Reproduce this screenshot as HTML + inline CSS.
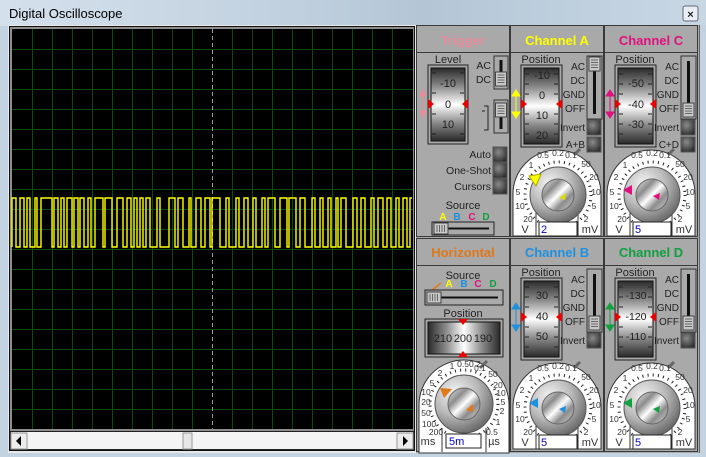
<!DOCTYPE html>
<html><head><meta charset="utf-8"><style>
html,body{margin:0;padding:0;width:706px;height:457px;overflow:hidden;background:#c8d6e4}
svg{display:block}
text{font-family:"Liberation Sans",sans-serif}
</style></head><body>
<svg width="706" height="457" viewBox="0 0 706 457" xmlns="http://www.w3.org/2000/svg">
<defs>
<linearGradient id="tb" x1="0" y1="0" x2="1" y2="0"><stop offset="0" stop-color="#d4e0ec"/><stop offset=".35" stop-color="#c4d3e1"/><stop offset=".6" stop-color="#b4c6d6"/><stop offset="1" stop-color="#c8d7e4"/></linearGradient>
<linearGradient id="dv" x1="0" y1="0" x2="0" y2="1"><stop offset="0" stop-color="#2a2a2a"/><stop offset=".25" stop-color="#8a8a8a"/><stop offset=".5" stop-color="#ffffff"/><stop offset=".75" stop-color="#8a8a8a"/><stop offset="1" stop-color="#2a2a2a"/></linearGradient>
<linearGradient id="dh" x1="0" y1="0" x2="1" y2="0"><stop offset="0" stop-color="#2a2a2a"/><stop offset=".25" stop-color="#8a8a8a"/><stop offset=".5" stop-color="#ffffff"/><stop offset=".75" stop-color="#8a8a8a"/><stop offset="1" stop-color="#2a2a2a"/></linearGradient>
<radialGradient id="ko" cx=".35" cy=".3" r=".8"><stop offset="0" stop-color="#f4f4f4"/><stop offset=".5" stop-color="#b8b8b8"/><stop offset="1" stop-color="#5a5a5a"/></radialGradient>
<linearGradient id="ki" x1="0" y1="0" x2="1" y2="1"><stop offset="0" stop-color="#f0f0f0"/><stop offset=".3" stop-color="#8c8c8c"/><stop offset=".5" stop-color="#ffffff"/><stop offset=".7" stop-color="#8c8c8c"/><stop offset="1" stop-color="#d8d8d8"/></linearGradient>
<radialGradient id="bt" cx=".4" cy=".35" r=".7"><stop offset="0" stop-color="#8a8a8a"/><stop offset="1" stop-color="#2e2e2e"/></radialGradient>
<g id="dial">
<path d="M3,236 V194 A44,44 0 0 1 91,194 V236 Z" fill="#fff" stroke="#333"/>
<line x1="64" y1="155" x2="70" y2="149" stroke="#666" stroke-width="3"/>
<line x1="26" y1="212" x2="26" y2="236" stroke="#333"/>
<line x1="68" y1="212" x2="68" y2="236" stroke="#333"/>
<circle cx="48" cy="195" r="33" fill="none" stroke="#222" stroke-width="3" stroke-dasharray="1 4.2"/>
<circle cx="48" cy="195" r="28" fill="url(#ko)" stroke="#555"/>
<circle cx="48" cy="195" r="16" fill="url(#ki)" stroke="#666"/>
<rect x="29" y="222" width="38" height="14" fill="#fff" stroke="#222"/>
</g>
<g id="dlab" font-size="8.5" fill="#333" text-anchor="middle">
<text x="33" y="158">0.5</text><text x="48" y="156">0.2</text><text x="61" y="158">0.1</text>
<text x="76" y="167">50</text><text x="84" y="180">20</text><text x="86" y="195">10</text><text x="84" y="209">5</text><text x="76" y="222">2</text>
<text x="21" y="168">1</text><text x="12" y="180">2</text><text x="8" y="195">5</text><text x="10" y="209">10</text><text x="18" y="222">20</text>
<text x="15" y="233" font-size="11">V</text><text x="80" y="233" font-size="11">mV</text>
</g>
<g id="btn"><rect x="0" y="0" width="14" height="15" fill="url(#bt)" stroke="#555"/></g>
<g id="drum">
<rect x="11" y="65" width="41" height="82" fill="#a8a8a8" stroke="#222"/>
<rect x="14" y="68" width="35" height="76" fill="url(#dv)" stroke="#111"/>
<path d="M15,74h4M15,84h4M15,94h4M15,114h4M15,124h4M15,134h4M44,74h4M44,84h4M44,94h4M44,114h4M44,124h4M44,134h4" stroke="#222"/>
<polygon points="11,99 17,104 11,109" fill="#e00"/><polygon points="52,99 46,104 52,109" fill="#e00"/>
</g>
<g id="sld">
<rect x="77" y="56" width="15" height="63" fill="#aaa" stroke="#333"/>
<rect x="83" y="61" width="3" height="53" fill="#111"/>
</g>
<g id="thumb"><rect x="0" y="0" width="11" height="14" fill="#c8c8c8" stroke="#444"/><path d="M2,3h7M2,5.5h7M2,8h7M2,10.5h7" stroke="#666"/></g>
</defs>

<rect width="706" height="457" fill="#c4d3e1"/>
<rect width="706" height="26" fill="url(#tb)"/>
<text x="9" y="18" font-size="13" fill="#000">Digital Oscilloscope</text>
<rect x="683" y="6" width="15" height="15" rx="2" fill="#e8eef4" stroke="#667"/>
<text x="690.5" y="18" font-size="11" font-weight="bold" text-anchor="middle" fill="#222">×</text>

<rect x="8" y="25" width="408" height="428" fill="#e8e8e8"/>
<rect x="9.5" y="26.5" width="405" height="424" fill="none" stroke="#111"/>
<rect x="10" y="27" width="404" height="404" fill="#8e8e8e"/>
<rect x="12" y="29" width="401" height="400" fill="#000"/>
<g stroke="#0d4a0d" stroke-width="1">
<path d="M32.5,29V429M52.5,29V429M72.5,29V429M92.5,29V429M112.5,29V429M132.5,29V429M152.5,29V429M172.5,29V429M192.5,29V429M232.5,29V429M252.5,29V429M272.5,29V429M292.5,29V429M312.5,29V429M332.5,29V429M352.5,29V429M372.5,29V429M392.5,29V429"/>
<path d="M12,49.5H413M12,69.5H413M12,89.5H413M12,109.5H413M12,129.5H413M12,149.5H413M12,169.5H413M12,189.5H413M12,209.5H413M12,229.5H413M12,249.5H413M12,269.5H413M12,289.5H413M12,309.5H413M12,329.5H413M12,349.5H413M12,369.5H413M12,389.5H413M12,409.5H413"/>
</g>
<line x1="212.5" y1="29" x2="212.5" y2="429" stroke="#9a9a9a" stroke-dasharray="4 3"/>
<path fill="none" stroke="#ffff00" stroke-width="1.4" d="M12,247V198H16V247H20V198H24V247H27V198H30V247H35V198H37V247H41V198H52V247H54V198H58V247H61V198H64V247H67V198H72V247H74V198H78V247H80V198H84V247H88V198H91V247H95V198H103V247H105V198H112V247H117V198H123V247H127V198H131V247H134V198H137V247H140V198H143V247H146V198H150V247H157V198H160V247H169V198H175V247H178V198H183V247H189V198H191V247H196V198H201V247H205V198H210V247H212V198H220V247H226V198H229V247H236V198H239V247H244V198H248V247H253V198H256V247H262V198H265V247H268V198H275V247H280V198H287V247H289V198H296V247H300V198H305V247H312V198H315V247H320V198H323V247H328V198H331V247H336V198H338V247H341V198H346V247H353V198H357V247H361V198H365V247H371V198H374V247H378V198H383V247H387V198H391V247H396V198H399V247H403V198H407V247H410V198H412"/>
<rect x="10.5" y="431.5" width="403" height="18" fill="#f4f4f4" stroke="#222"/>
<rect x="11" y="433" width="16" height="16" fill="#ececec" stroke="#999"/>
<polygon points="21,436 16,441 21,446" fill="#000"/>
<rect x="397" y="433" width="16" height="16" fill="#ececec" stroke="#999"/>
<polygon points="403,436 408,441 403,446" fill="#000"/>
<rect x="183" y="433" width="9" height="16" fill="#e6e6e6" stroke="#999"/>

<rect x="416" y="25" width="290" height="432" fill="#c4d3e1"/>
<rect x="416" y="25" width="283" height="428" fill="#a9a9a9"/>
<g fill="none" stroke="#3a3a3a">
<rect x="416.5" y="25.5" width="93" height="211"/><rect x="510.5" y="25.5" width="93" height="211"/><rect x="604.5" y="25.5" width="93" height="211"/>
<rect x="416.5" y="238.5" width="93" height="213"/><rect x="510.5" y="238.5" width="93" height="213"/><rect x="604.5" y="238.5" width="93" height="213"/>
<path d="M417,52.5H509M511,52.5H603M605,52.5H697M417,265.5H509M511,265.5H603M605,265.5H697"/>
</g>
<line x1="699.5" y1="25" x2="699.5" y2="453" stroke="#666"/>
<g font-size="13" font-weight="bold" text-anchor="middle">
<text x="463" y="45" fill="#e88c9a">Trigger</text>
<text x="557" y="45" fill="#ffff00">Channel A</text>
<text x="651" y="45" fill="#e0107f">Channel C</text>
<text x="463" y="257" fill="#e07818">Horizontal</text>
<text x="557" y="257" fill="#1e90e0">Channel B</text>
<text x="651" y="257" fill="#10a040">Channel D</text>
</g>

<g transform="translate(416,0)">
<text x="32" y="63" font-size="11" fill="#222" text-anchor="middle">Level</text>
<rect x="12" y="65" width="40" height="79" fill="#a8a8a8" stroke="#222"/>
<rect x="15" y="68" width="34" height="73" fill="url(#dv)" stroke="#111"/>
<path d="M16,73h4M16,93h4M16,114h4M16,134h4M44,73h4M44,93h4M44,114h4M44,134h4" stroke="#222"/>
<g font-size="11" fill="#222" text-anchor="middle"><text x="32" y="87">-10</text><text x="32" y="108">0</text><text x="32" y="128">10</text></g>
<polygon points="12,99 18,104 12,109" fill="#e00"/><polygon points="52,99 46,104 52,109" fill="#e00"/>
<g stroke="#e88c9a" fill="#e88c9a"><line x1="7" y1="94" x2="7" y2="113"/><polygon points="4,96 7,90 10,96"/><polygon points="4,111 7,117 10,111"/></g>
<g font-size="10.5" fill="#222" text-anchor="end"><text x="75" y="69">AC</text><text x="75" y="83">DC</text>
<text x="75" y="158">Auto</text><text x="75" y="174">One-Shot</text><text x="75" y="190">Cursors</text></g>
<rect x="78" y="56" width="14" height="33" fill="#aaa" stroke="#333"/><rect x="83.5" y="60" width="3" height="25" fill="#111"/>
<use href="#thumb" x="79.5" y="72"/>
<path d="M72,118V106H68M72,118V130H68" fill="none" stroke="#222"/><path d="M66,111h3" stroke="#222"/>
<rect x="78" y="100" width="14" height="33" fill="#aaa" stroke="#333"/><rect x="83.5" y="104" width="3" height="25" fill="#111"/>
<use href="#thumb" x="79.5" y="103"/>
<use href="#btn" x="77" y="147"/><use href="#btn" x="77" y="163"/><use href="#btn" x="77" y="179"/>
<text x="47" y="209" font-size="11" fill="#222" text-anchor="middle">Source</text>
<g font-size="10" font-weight="bold" text-anchor="middle"><text x="27" y="220" fill="#ffff00">A</text><text x="41" y="220" fill="#1e90e0">B</text><text x="56" y="220" fill="#e0107f">C</text><text x="70" y="220" fill="#10a040">D</text></g>
<rect x="16" y="222" width="62" height="13" fill="#aaa" stroke="#222"/><line x1="22" y1="228.5" x2="73" y2="228.5" stroke="#111" stroke-width="2"/>
<rect x="18" y="223" width="14" height="11" fill="#c8c8c8" stroke="#444"/><path d="M21,225v7M23.5,225v7M26,225v7M28.5,225v7" stroke="#666"/>
</g>

<g transform="translate(510,0)">
<text x="31" y="63" font-size="11" fill="#222" text-anchor="middle">Position</text>
<use href="#drum"/>
<g font-size="11" fill="#222" text-anchor="middle"><text x="32" y="79">-10</text><text x="32" y="99">0</text><text x="32" y="119">10</text><text x="32" y="139">20</text></g>
<g stroke="#ffff00" fill="#ffff00"><line x1="6" y1="94" x2="6" y2="114"/><polygon points="2,96 6,90 10,96"/><polygon points="2,112 6,118 10,112"/></g>
<g font-size="10" fill="#222" text-anchor="end"><text x="75" y="70">AC</text><text x="75" y="84">DC</text><text x="75" y="98">GND</text><text x="75" y="112">OFF</text><text x="75" y="131">Invert</text><text x="75" y="148">A+B</text></g>
<use href="#sld"/><use href="#thumb" x="79" y="57"/>
<use href="#btn" x="77" y="120"/><use href="#btn" x="77" y="137"/>
<use href="#dial"/><use href="#dlab"/>
<polygon points="19,176 31,174 26,186" fill="#ffff00" stroke="#aa0"/>
<polygon points="49,198 56,193 55,200" fill="#dd0"/>
<text x="31" y="233" font-size="11" fill="#00c">2</text>
</g>

<g transform="translate(604,0)">
<text x="31" y="63" font-size="11" fill="#222" text-anchor="middle">Position</text>
<use href="#drum"/>
<g font-size="11" fill="#222" text-anchor="middle"><text x="32" y="87">-50</text><text x="32" y="108">-40</text><text x="32" y="128">-30</text></g>
<g stroke="#e0107f" fill="#e0107f"><line x1="6" y1="94" x2="6" y2="114"/><polygon points="2,96 6,90 10,96"/><polygon points="2,112 6,118 10,112"/></g>
<g font-size="10" fill="#222" text-anchor="end"><text x="75" y="70">AC</text><text x="75" y="84">DC</text><text x="75" y="98">GND</text><text x="75" y="112">OFF</text><text x="75" y="131">Invert</text><text x="75" y="148">C+D</text></g>
<use href="#sld"/><use href="#thumb" x="79" y="103"/>
<use href="#btn" x="77" y="120"/><use href="#btn" x="77" y="137"/>
<use href="#dial"/><use href="#dlab"/>
<polygon points="19,190 28,185 28,195" fill="#e0107f"/>
<polygon points="49,196 56,193 55,200" fill="#e0107f"/>
<text x="31" y="233" font-size="11" fill="#00c">5</text>
</g>

<g transform="translate(416,0)">
<text x="47" y="279" font-size="11" fill="#222" text-anchor="middle">Source</text>
<path d="M15,291L25,283" stroke="#e07818" stroke-width="1.5"/>
<g font-size="10" font-weight="bold" text-anchor="middle"><text x="33" y="287" fill="#ffff00">A</text><text x="48" y="287" fill="#1e90e0">B</text><text x="62" y="287" fill="#e0107f">C</text><text x="77" y="287" fill="#10a040">D</text></g>
<rect x="9" y="290" width="78" height="15" fill="#aaa" stroke="#222"/><line x1="16" y1="297.5" x2="82" y2="297.5" stroke="#111" stroke-width="2"/>
<rect x="11" y="292" width="14" height="11" fill="#c8c8c8" stroke="#444"/><path d="M14,294v7M16.5,294v7M19,294v7M21.5,294v7" stroke="#666"/>
<text x="47" y="317" font-size="11" fill="#222" text-anchor="middle">Position</text>
<rect x="9" y="319" width="78" height="38" fill="#a8a8a8" stroke="#222"/>
<rect x="12" y="322" width="72" height="32" fill="url(#dh)" stroke="#111"/>
<g font-size="11" fill="#222" text-anchor="middle"><text x="27" y="342">210</text><text x="47" y="342">200</text><text x="67" y="342">190</text></g>
<polygon points="42,319 52,319 47,325" fill="#e00"/><polygon points="42,357 52,357 47,351" fill="#e00"/>
<path d="M3,453 V405 A45,45 0 0 1 93,405 V453 Z" fill="#fff" stroke="#333"/>
<line x1="64" y1="368" x2="71" y2="361" stroke="#666" stroke-width="3"/>
<line x1="26" y1="428" x2="26" y2="452" stroke="#333"/><line x1="70" y1="428" x2="70" y2="452" stroke="#333"/>
<circle cx="48" cy="404" r="34" fill="none" stroke="#222" stroke-width="3" stroke-dasharray="1 4.2"/>
<circle cx="48" cy="404" r="29" fill="url(#ko)" stroke="#555"/>
<circle cx="48" cy="404" r="16" fill="url(#ki)" stroke="#666"/>
<rect x="30" y="434" width="35" height="14" fill="#fff" stroke="#222"/>
<text x="33" y="445" font-size="11" fill="#00c">5m</text>
<g font-size="8.5" fill="#333" text-anchor="middle">
<text x="36" y="369">1</text><text x="53" y="367">0.50.2</text><text x="64" y="371">0.1</text>
<text x="24" y="376">2</text><text x="16" y="386">5</text><text x="10" y="395">10</text><text x="10" y="405">20</text><text x="10" y="416">50</text><text x="13" y="427">100</text><text x="20" y="435">200</text>
<text x="77" y="377">50</text><text x="82" y="388">20</text><text x="85" y="396">10</text><text x="87" y="405">5</text><text x="86" y="414">2</text><text x="82" y="425">1</text><text x="76" y="435">0.5</text>
<text x="12" y="445" font-size="11">ms</text><text x="78" y="445" font-size="11">µs</text>
</g>
<polygon points="24,388 36,389 28,398" fill="#e07818"/>
<polygon points="50,410 57,404 57,412" fill="#e07818"/>
</g>

<g transform="translate(510,213)">
<text x="31" y="63" font-size="11" fill="#222" text-anchor="middle">Position</text>
<use href="#drum"/>
<g font-size="11" fill="#222" text-anchor="middle"><text x="32" y="86">30</text><text x="32" y="107">40</text><text x="32" y="127">50</text></g>
<g stroke="#1e90e0" fill="#1e90e0"><line x1="6" y1="94" x2="6" y2="114"/><polygon points="2,96 6,90 10,96"/><polygon points="2,112 6,118 10,112"/></g>
<g font-size="10" fill="#222" text-anchor="end"><text x="75" y="70">AC</text><text x="75" y="84">DC</text><text x="75" y="98">GND</text><text x="75" y="112">OFF</text><text x="75" y="131">Invert</text></g>
<use href="#sld"/><use href="#thumb" x="79" y="103"/>
<use href="#btn" x="77" y="120"/>
<use href="#dial"/><use href="#dlab"/>
<polygon points="19,190 28,185 28,195" fill="#1e90e0"/>
<polygon points="49,196 56,193 55,200" fill="#1e90e0"/>
<text x="31" y="233" font-size="11" fill="#00c">5</text>
</g>

<g transform="translate(604,213)">
<text x="31" y="63" font-size="11" fill="#222" text-anchor="middle">Position</text>
<use href="#drum"/>
<g font-size="10.5" fill="#222" text-anchor="middle"><text x="32" y="86">-130</text><text x="32" y="107">-120</text><text x="32" y="127">-110</text></g>
<g stroke="#10a040" fill="#10a040"><line x1="6" y1="94" x2="6" y2="114"/><polygon points="2,96 6,90 10,96"/><polygon points="2,112 6,118 10,112"/></g>
<g font-size="10" fill="#222" text-anchor="end"><text x="75" y="70">AC</text><text x="75" y="84">DC</text><text x="75" y="98">GND</text><text x="75" y="112">OFF</text><text x="75" y="131">Invert</text></g>
<use href="#sld"/><use href="#thumb" x="79" y="103"/>
<use href="#btn" x="77" y="120"/>
<use href="#dial"/><use href="#dlab"/>
<polygon points="19,190 28,185 28,195" fill="#10a040"/>
<polygon points="49,196 56,193 55,200" fill="#10a040"/>
<text x="31" y="233" font-size="11" fill="#00c">5</text>
</g>
</svg>
</body></html>
